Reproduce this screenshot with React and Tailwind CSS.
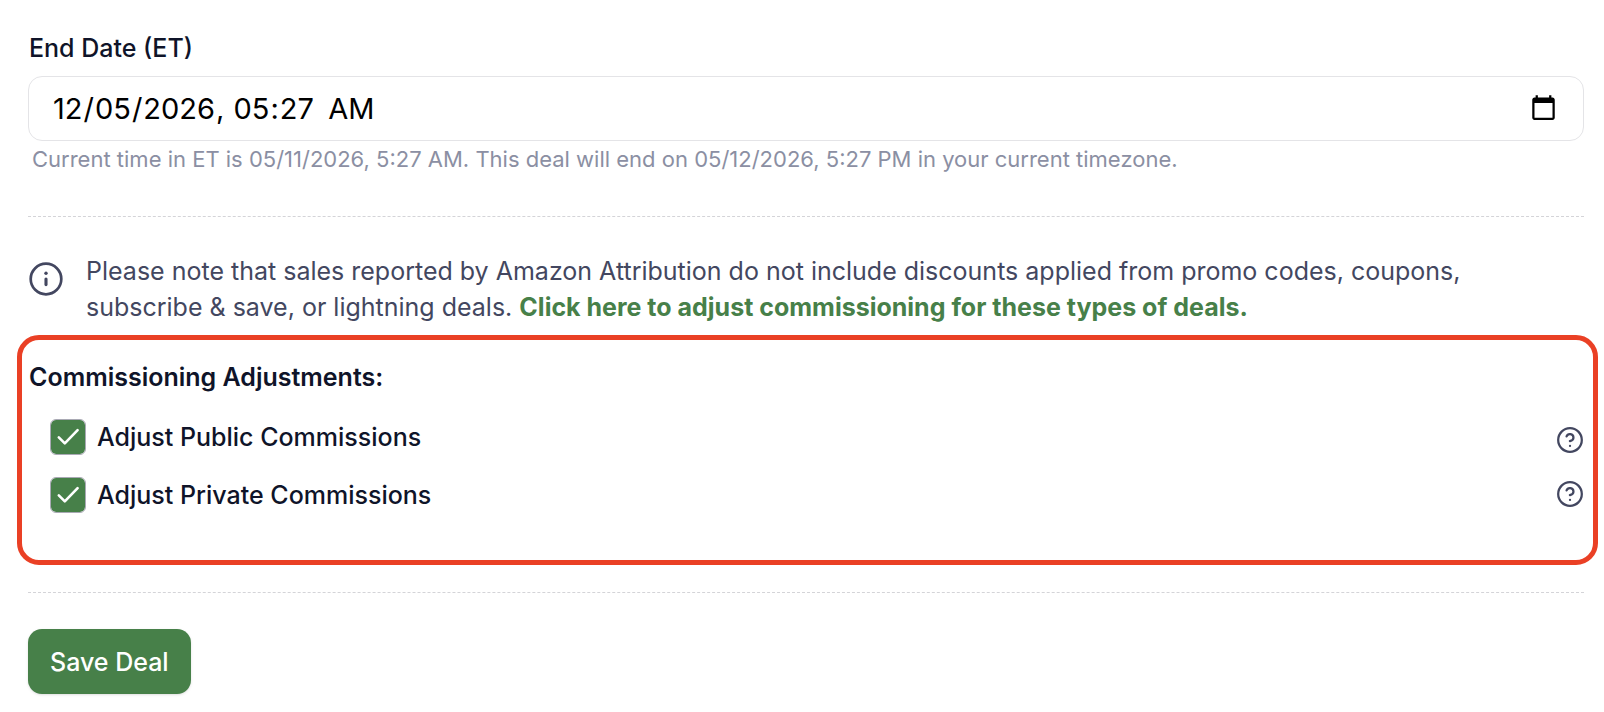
import { useState } from "react";

function InfoIcon() {
  return (
    <svg viewBox="0 0 34 34" className="mt-[9px] size-[34px] shrink-0" fill="none" stroke="currentColor" aria-hidden="true">
      <circle cx="17" cy="17" r="15.3" strokeWidth="2.7" />
      <path d="M17 17v5.6" strokeWidth="3.1" strokeLinecap="round" />
      <circle cx="17" cy="11.2" r="1.7" fill="currentColor" stroke="none" />
    </svg>
  );
}

function HelpButton({ label }) {
  return (
    <button type="button" aria-label={label} className="block size-[26px] text-[#434760]">
      <svg viewBox="1 1 22 22" className="size-full" fill="none" stroke="currentColor" strokeWidth="1.9" strokeLinecap="round" strokeLinejoin="round" aria-hidden="true">
        <circle cx="12" cy="12" r="10" />
        <path d="M9.09 9a3 3 0 0 1 5.83 1c0 2-3 3-3 3" />
        <path d="M12 17h.01" />
      </svg>
    </button>
  );
}

function Adjustment({ id, label }) {
  const [checked, setChecked] = useState(true);
  return (
    <div className="flex items-center gap-[11px]">
      <span className="grid size-9 shrink-0">
        <input
          id={id}
          type="checkbox"
          checked={checked}
          onChange={(e) => setChecked(e.target.checked)}
          className="peer col-start-1 row-start-1 size-9 appearance-none rounded-[6px] border border-[#a9a9b4] bg-white bg-clip-padding checked:bg-[#478049]"
        />
        <svg viewBox="0 0 36 36" className="pointer-events-none invisible col-start-1 row-start-1 size-9 peer-checked:visible" fill="none" stroke="white" strokeWidth="2.6" strokeLinecap="round" strokeLinejoin="round" aria-hidden="true">
          <path d="M8.8 18.4l6 6L27.6 11.2" />
        </svg>
      </span>
      <label htmlFor={id} className="text-[25px] leading-9 font-medium">
        {label}
      </label>
    </div>
  );
}

export default function App() {
  const [end, setEnd] = useState("2026-12-05T05:27");
  return (
    <form onSubmit={(e) => e.preventDefault()} className="bg-white pt-[30px] pr-5 pb-[18px] pl-7 font-[Inter,sans-serif] text-[#0f1429]">
      <div>
        <label htmlFor="end-date" className="block pl-px text-[25px] leading-9 font-medium">
          End Date (ET)
        </label>
        <input
          id="end-date"
          type="datetime-local"
          value={end}
          onChange={(e) => setEnd(e.target.value)}
          className="mt-[10px] block h-[65px] w-full rounded-[14px] border border-[#e4e4e7] bg-white px-[23px] text-[29px] text-black [&::-webkit-datetime-edit-ampm-field]:pl-2"
        />
        <p className="mt-1 pl-1 text-[22px] leading-7 text-[#8b8fa3]">
          Current time in ET is 05/11/2026, 5:27 AM. This deal will end on 05/12/2026, 5:27 PM in your current timezone.
        </p>
      </div>

      <hr className="mt-[43px] border-t border-dashed border-[#d4d4d8]" />

      <div className="mt-9 flex items-start gap-[23px] pl-px text-[#434760]">
        <InfoIcon />
        <p className="pr-10 text-[25px] leading-9">
          Please note that sales reported by Amazon Attribution do not include discounts applied from promo codes, coupons, subscribe &amp; save, or lightning deals.{" "}
          <a href="#commissioning" className="font-bold text-[#478049]">
            Click here to adjust commissioning for these types of deals.
          </a>
        </p>
      </div>

      <section id="commissioning" className="mt-[10px] -mr-[14px] -ml-[11px] rounded-[22px] border-5 border-[#ea4025] pt-[19px] pr-[10px] pb-[47px] pl-[6px]">
        <h2 className="pl-px text-[25px] leading-9 font-semibold">Commissioning Adjustments:</h2>
        <div className="mt-6 flex items-start justify-between pl-[22px]">
          <div className="flex flex-col gap-[22px]">
            <Adjustment id="public" label="Adjust Public Commissions" />
            <Adjustment id="private" label="Adjust Private Commissions" />
          </div>
          <div className="flex flex-col gap-7 pt-2">
            <HelpButton label="About public commissions" />
            <HelpButton label="About private commissions" />
          </div>
        </div>
      </section>

      <hr className="mt-[27px] border-t border-dashed border-[#d4d4d8]" />

      <button type="submit" className="mt-9 h-[65px] rounded-[14px] bg-[#478049] px-[22px] text-[25px] leading-9 font-medium text-white shadow-sm">
        Save Deal
      </button>
    </form>
  );
}
